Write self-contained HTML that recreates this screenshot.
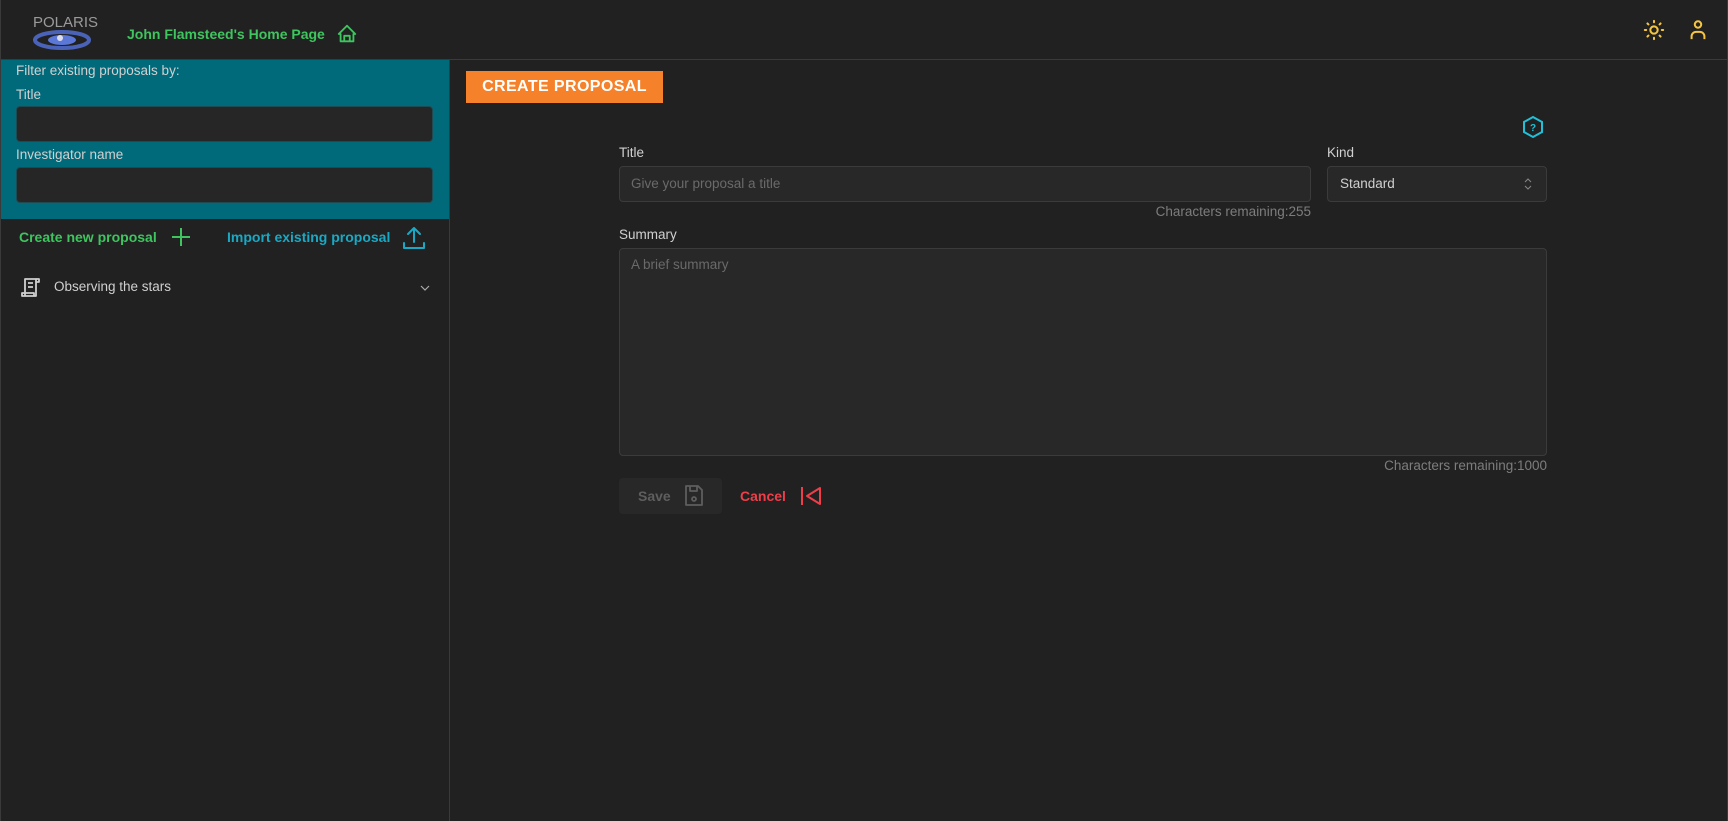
<!DOCTYPE html>
<html><head><meta charset="utf-8"><style>
*{box-sizing:border-box;margin:0;padding:0}
body{width:1728px;height:821px;background:#212121;font-family:"Liberation Sans",sans-serif;position:relative;overflow:hidden;color:#c9c9c9}
.a{position:absolute}
.inp{position:absolute;background:#282828;border:1px solid #3b3b3b;border-radius:4px}
</style></head><body>
<div class="a" style="left:0;top:0;width:1px;height:821px;background:#3a3a3a"></div>
<div class="a" style="right:0;top:0;width:1px;height:821px;background:#3a3a3a"></div>
<!-- header -->
<div class="a" style="left:0;top:59px;width:1728px;height:1px;background:#3a3a3a"></div>
<div class="a" style="left:33px;top:14px;font-size:15px;color:#9a9a9a">POLARIS</div>
<svg class="a" style="left:32px;top:28px" width="60" height="24" viewBox="0 0 60 24"><ellipse cx="30" cy="12" rx="27" ry="8" fill="none" stroke="#4a63b8" stroke-width="4"/><ellipse cx="30" cy="12" rx="14" ry="5" fill="#5b78d8"/><circle cx="28" cy="10" r="3" fill="#dde"/></svg>
<div class="a" style="left:127px;top:26px;font-size:14px;font-weight:bold;color:#3ec55f">John Flamsteed's Home Page</div>
<svg class="a" style="left:336px;top:23px" width="22" height="22" viewBox="0 0 24 24" fill="none" stroke="#3ec55f" stroke-width="2" stroke-linejoin="round"><path d="M5 12H3l9-9 9 9h-2v8H5z"/><path d="M9 20v-6h6v6"/></svg>
<svg class="a" style="left:1643px;top:19px" width="22" height="22" viewBox="0 0 24 24" fill="none" stroke="#f5c542" stroke-width="2.2" stroke-linecap="round"><circle cx="12" cy="12" r="4"/><path d="M12 2v1.5M12 20.5V22M2 12h1.5M20.5 12H22M4.9 4.9l1 1M18.1 18.1l1 1M4.9 19.1l1-1M18.1 5.9l1-1"/></svg>
<svg class="a" style="left:1687px;top:18px" width="22" height="24" viewBox="0 0 24 24" fill="none" stroke="#f5c542" stroke-width="2.2"><circle cx="12" cy="6" r="3.5"/><path d="M5 22v-3a5 5 0 0 1 5-5h4a5 5 0 0 1 5 5v3"/></svg>
<!-- sidebar -->
<div class="a" style="left:449px;top:60px;width:1px;height:761px;background:#3a3a3a"></div>
<div class="a" style="left:1px;top:60px;width:448px;height:159px;background:#006a7a"></div>
<div class="a" style="left:16px;top:63px;font-size:13.5px;color:#d0d0d0">Filter existing proposals by:</div>
<div class="a" style="left:16px;top:87px;font-size:13.5px;color:#d0d0d0">Title</div>
<div class="inp" style="left:16px;top:106px;width:417px;height:36px;background:#262626;border-color:#1f4a52"></div>
<div class="a" style="left:16px;top:147px;font-size:13.5px;color:#d0d0d0">Investigator name</div>
<div class="inp" style="left:16px;top:167px;width:417px;height:36px;background:#262626;border-color:#1f4a52"></div>
<div class="a" style="left:19px;top:229px;font-size:14px;font-weight:bold;color:#3ec55f">Create new proposal</div>
<svg class="a" style="left:170px;top:226px" width="22" height="22" viewBox="0 0 22 22" stroke="#3ec55f" stroke-width="2"><path d="M11 2v18M2 11h18"/></svg>
<div class="a" style="left:227px;top:229px;font-size:14px;font-weight:bold;color:#1aa9c4">Import existing proposal</div>
<svg class="a" style="left:402px;top:225px" width="24" height="26" viewBox="0 0 24 26" fill="none" stroke="#1aa9c4" stroke-width="2" stroke-linecap="round" stroke-linejoin="round"><path d="M12 17V3M6 9l6-6 6 6M2 18v5h20v-5"/></svg>
<svg class="a" style="left:19px;top:276px" width="24" height="24" viewBox="0 0 24 24" fill="none" stroke="#cfcfcf" stroke-width="1.8" stroke-linejoin="round"><path d="M6 20V3h11v17H3v-3h12v3M9 7h5M9 11h5"/><path d="M17 3h3v3h-3"/></svg>
<div class="a" style="left:54px;top:279px;font-size:13.5px;color:#d0d0d0">Observing the stars</div>
<svg class="a" style="left:420px;top:284px" width="10" height="8" viewBox="0 0 10 8" fill="none" stroke="#aaa" stroke-width="1.2"><path d="M1 2l4 4 4-4"/></svg>
<!-- main -->
<div class="a" style="left:466px;top:71px;width:197px;height:32px;background:#f5822a;color:#fff;font-weight:bold;font-size:16px;line-height:32px;text-align:center;letter-spacing:.4px">CREATE PROPOSAL</div>
<svg class="a" style="left:1521px;top:115px" width="24" height="24" viewBox="0 0 24 24" fill="none" stroke="#22c0d8" stroke-width="2"><path d="M12 2l9 5v10l-9 5-9-5V7z"/><text x="12" y="16" font-size="10" font-weight="bold" text-anchor="middle" fill="#22c0d8" stroke="none" font-family="Liberation Sans">?</text></svg>
<div class="a" style="left:619px;top:145px;font-size:13.5px;color:#d0d0d0">Title</div>
<div class="inp" style="left:619px;top:166px;width:692px;height:36px"></div>
<div class="a" style="left:631px;top:176px;font-size:13.5px;color:#6a6a6a">Give your proposal a title</div>
<div class="a" style="left:1000px;top:204px;width:311px;text-align:right;font-size:13.5px;color:#7d7d7d">Characters remaining:255</div>
<div class="a" style="left:1327px;top:145px;font-size:13.5px;color:#d0d0d0">Kind</div>
<div class="inp" style="left:1327px;top:166px;width:220px;height:36px"></div>
<div class="a" style="left:1340px;top:176px;font-size:13.5px;color:#d0d0d0">Standard</div>
<svg class="a" style="left:1523px;top:177px" width="10" height="14" viewBox="0 0 10 14" fill="none" stroke="#888" stroke-width="1"><path d="M2 5l3-3 3 3M2 9l3 3 3-3"/></svg>
<div class="a" style="left:619px;top:227px;font-size:13.5px;color:#d0d0d0">Summary</div>
<div class="inp" style="left:619px;top:248px;width:928px;height:208px"></div>
<div class="a" style="left:631px;top:257px;font-size:13.5px;color:#6a6a6a">A brief summary</div>
<div class="a" style="left:1200px;top:458px;width:347px;text-align:right;font-size:13.5px;color:#7d7d7d">Characters remaining:1000</div>
<div class="a" style="left:619px;top:478px;width:103px;height:36px;background:#282828;border-radius:4px"></div>
<div class="a" style="left:638px;top:488px;font-size:14px;font-weight:bold;color:#5e5e5e">Save</div>
<svg class="a" style="left:683px;top:484px" width="22" height="24" viewBox="0 0 22 24" fill="none" stroke="#5e5e5e" stroke-width="1.8" stroke-linejoin="round"><path d="M3 2h12l4 4v15H3z"/><path d="M7 2v5h7V2"/><circle cx="11" cy="15" r="2"/></svg>
<div class="a" style="left:740px;top:488px;font-size:14px;font-weight:bold;color:#ef3e4a">Cancel</div>
<svg class="a" style="left:799px;top:485px" width="24" height="22" viewBox="0 0 24 22" fill="none" stroke="#ef3e4a" stroke-width="2"><path d="M3 2v18"/><path d="M21 3L8 11l13 8z" stroke-linejoin="round"/></svg>
</body></html>
